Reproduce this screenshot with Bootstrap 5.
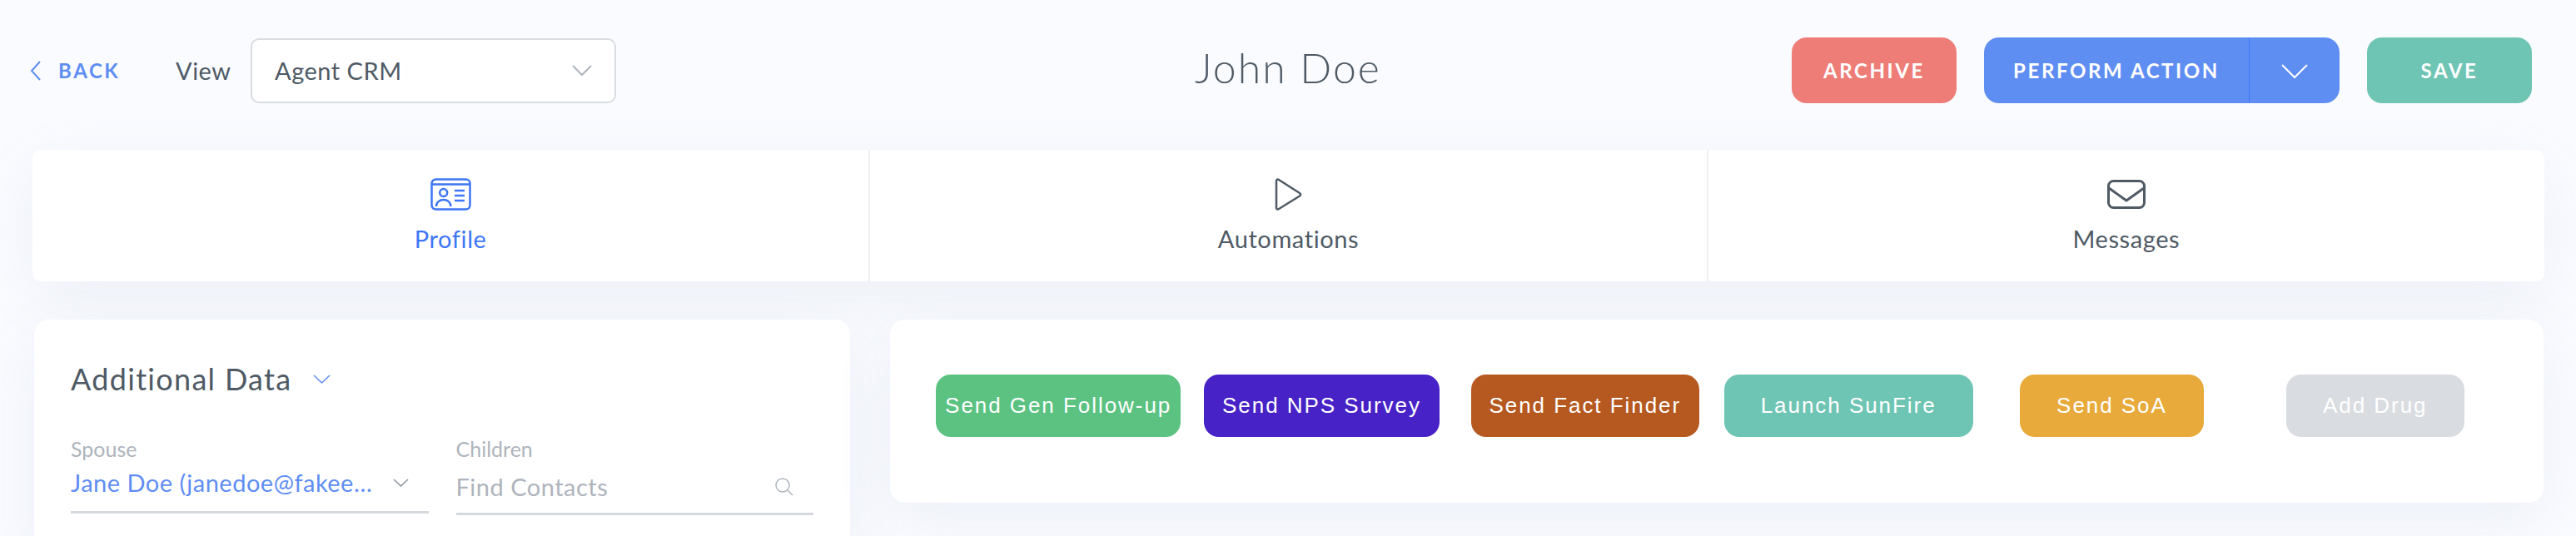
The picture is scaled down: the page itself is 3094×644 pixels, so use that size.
<!DOCTYPE html>
<html lang="en">
<head>
    <meta charset="UTF-8">
    <title>John Doe</title>
    <link href="https://cdn.jsdelivr.net/npm/bootstrap@5.3.0/dist/css/bootstrap.min.css" rel="stylesheet">
    <style>
        html, body { height: 644px; overflow: hidden; }
        body {
            background-color: #f9fbff;
            font-family: Lato, "Open Sans", sans-serif;
            color: #4f5a65;
        }
        .page-wrap { padding: 45px 38px 0 36px; }
        .top-bar { height: 79px; margin: 0 15px 56px 0; }
        .top-side { flex: 1 1 0; }
        .back-link { color: #5f8ef3; font-size: 24px; font-weight: 700; letter-spacing: 2.6px; text-decoration: none; width: 175px; }
        .back-link svg { margin-right: 20px; }
        .view-label { font-size: 29px; letter-spacing: .5px; width: 90px; }
        .view-select {
            width: 439px; height: 78px; background: #fff; border: 2px solid #d9dce1; border-radius: 10px;
            padding: 0 27px; font-size: 29px; letter-spacing: .5px;
        }
        .title-slot { padding: 0 0 8px 17px; }
        .person-name { font-size: 50px; font-weight: 300; margin: 0; letter-spacing: 2px; color: #4f5a65; }
        .act-btn {
            height: 79px; border: 0; border-radius: 18px; color: #fff; font-size: 24px; font-weight: 700;
            letter-spacing: 2.6px; padding: 0;
        }
        .act-archive { background: #ee7d78; width: 198px; margin-right: 33px; }
        .act-save { background: #6fc5b3; width: 198px; margin-left: 33px; }
        .act-split { background: #5f8ef3; width: 427px; height: 79px; border-radius: 18px; color: #fff; }
        .act-main { width: 319px; background: none; color: #fff; border: 0; font-size: 24px; font-weight: 700; letter-spacing: 2.6px; border-right: 1px solid #3e76f5; }
        .act-caret { flex: 1; background: none; border: 0; }
        .tab-strip { margin: 0 0 0 3px; height: 158px; background: #fff; border-radius: 10px; box-shadow: 0 20px 70px rgba(120,130,170,.09); }
        .tab-cell { flex: 1 1 0; padding-top: 34px; text-align: center; font-size: 29px; letter-spacing: .6px; border-right: 2px solid #eff0f4; }
        .tab-cell:last-child { border-right: 0; }
        .tab-cell svg { display: block; margin: 0 auto 12px; height: 39px; }
        .tab-on { color: #3e76f5; }
        .panel-row { gap: 48px; margin: 46px 1px 0 5px; }
        .panel-left { width: 980px; height: 300px; padding: 50px 44px 0; background: #fff; border-radius: 18px; box-shadow: 0 20px 70px rgba(120,130,170,.09); }
        .panel-right { flex: 1; height: 220px; background: #fff; border-radius: 18px; padding: 66px 44px 0; box-shadow: 0 20px 70px rgba(120,130,170,.09); }
        .panel-title { font-size: 36px; font-weight: 400; letter-spacing: 1.3px; margin: 0 0 48px; color: #4f5a65; }
        .panel-title svg { margin-left: 26px; }
        .field-grid { gap: 33px; }
        .field-box { width: 430px; }
        .field-label { font-size: 25px; color: #aeb4bc; line-height: 28px; }
        .field-value { font-size: 29px; letter-spacing: .5px; border-bottom: 3px solid #d5d9de; }
        .value-spouse { height: 64px; padding-bottom: 8px; }
        .value-find { height: 66px; }
        .spouse-text { color: #5f8ef3; width: 362px; }
        .find-text { color: #aeb4bc; }
        .send-btn {
            height: 75px; border: 0; border-radius: 18px; color: #fff; padding: 0;
            font-family: "Liberation Sans", sans-serif; font-size: 26px; letter-spacing: 1.95px;
        }
        .send-green { background: #5bc282; width: 294px; }
        .send-purple { background: #4722c6; width: 283px; }
        .send-brown { background: #b55920; width: 274px; }
        .send-teal { background: #6fc5b3; width: 299px; }
        .send-amber { background: #e8aa3b; width: 221px; }
        .send-grey { background: #d9dce1; width: 214px; }
    </style>
</head>
<body>
    <div class="page-wrap">
        <div class="top-bar d-flex align-items-center">
            <div class="top-side d-flex align-items-center">
                <a href="#" class="back-link d-flex align-items-center">
                    <svg width="14" height="24" viewBox="0 0 14 24" fill="none" stroke="#5f8ef3" stroke-width="2"><path d="M12 1 2 12l10 11"/></svg>BACK
                </a>
                <span class="view-label">View</span>
                <div class="view-select d-flex align-items-center justify-content-between">
                    <span>Agent CRM</span>
                    <svg width="24" height="14" viewBox="0 0 24 14" fill="none" stroke="#aeb4bc" stroke-width="2"><path d="M1 1l11 11L23 1"/></svg>
                </div>
            </div>
            <div class="title-slot"><h1 class="person-name">John Doe</h1></div>
            <div class="top-side d-flex align-items-center justify-content-end">
                <button class="act-btn act-archive">ARCHIVE</button>
                <div class="act-split d-flex">
                    <button class="act-main">PERFORM ACTION</button>
                    <button class="act-caret"><svg width="32" height="18" viewBox="0 0 32 18" fill="none" stroke="#fff" stroke-width="2"><path d="M1 1l15 15L31 1"/></svg></button>
                </div>
                <button class="act-btn act-save">SAVE</button>
            </div>
        </div>

        <div class="tab-strip d-flex">
            <div class="tab-cell tab-on">
                <svg width="49" height="39" viewBox="0 0 49 39" fill="none" stroke="#3e76f5" stroke-width="2.5">
                    <rect x="1.500" y="1.500" width="46" height="36" rx="5"/>
                    <path d="M1.500 7.500h46M29 15h12M29 21h12M29 27h12M7 34c0-5 4-8 8.700-8s8.700 3 8.700 8"/>
                    <circle cx="15.700" cy="17.500" r="4.500"/>
                </svg>
                Profile
            </div>
            <div class="tab-cell">
                <svg width="33" height="39" viewBox="0 0 33 39" fill="none" stroke="#4f5a65" stroke-width="2.500" stroke-linejoin="round"><path d="M2 3.500c0-2 1.500-2.500 3-1.500l25 16c1.500 1 1.500 2.500 0 3.500L5 37c-1.500 1-3 .5-3-1.500z"/></svg>
                Automations
            </div>
            <div class="tab-cell">
                <svg width="46" height="39" viewBox="0 0 46 39" fill="none" stroke="#4f5a65" stroke-width="3" stroke-linejoin="round"><rect x="1.500" y="3.500" width="43" height="32" rx="6"/><path d="M2 12l21 15 21-15"/></svg>
                Messages
            </div>
        </div>

        <div class="panel-row d-flex align-items-start">
            <div class="panel-left">
                <h2 class="panel-title d-flex align-items-center">Additional Data
                    <svg width="21" height="11" viewBox="0 0 21 11" fill="none" stroke="#5f8ef3" stroke-width="1.500"><path d="M1 1l9.500 9L20 1"/></svg>
                </h2>
                <div class="field-grid d-flex">
                    <div class="field-box">
                        <div class="field-label">Spouse</div>
                        <div class="field-value value-spouse d-flex align-items-center justify-content-between">
                            <span class="spouse-text text-truncate">Jane Doe (janedoe@fakeemail.com)</span>
                            <svg class="me-4" width="19" height="10" viewBox="0 0 19 10" fill="none" stroke="#8b939c" stroke-width="1.500"><path d="M1 1l8.500 8L18 1"/></svg>
                        </div>
                    </div>
                    <div class="field-box">
                        <div class="field-label">Children</div>
                        <div class="field-value value-find d-flex align-items-center justify-content-between">
                            <span class="find-text">Find Contacts</span>
                            <svg class="me-4" width="22" height="22" viewBox="0 0 22 22" fill="none" stroke="#aeb4bc" stroke-width="1.500"><circle cx="9" cy="9" r="8"/><path d="M15 15l6 6"/></svg>
                        </div>
                    </div>
                </div>
            </div>
            <div class="panel-right">
                <div class="row g-0 text-center">
                    <div class="col-2"><button class="send-btn send-green">Send Gen Follow-up</button></div>
                    <div class="col-2"><button class="send-btn send-purple">Send NPS Survey</button></div>
                    <div class="col-2"><button class="send-btn send-brown">Send Fact Finder</button></div>
                    <div class="col-2"><button class="send-btn send-teal">Launch SunFire</button></div>
                    <div class="col-2"><button class="send-btn send-amber">Send SoA</button></div>
                    <div class="col-2"><button class="send-btn send-grey">Add Drug</button></div>
                </div>
            </div>
        </div>
    </div>
    <script src="https://cdn.jsdelivr.net/npm/bootstrap@5.3.0/dist/js/bootstrap.bundle.min.js"></script>
</body>
</html>
